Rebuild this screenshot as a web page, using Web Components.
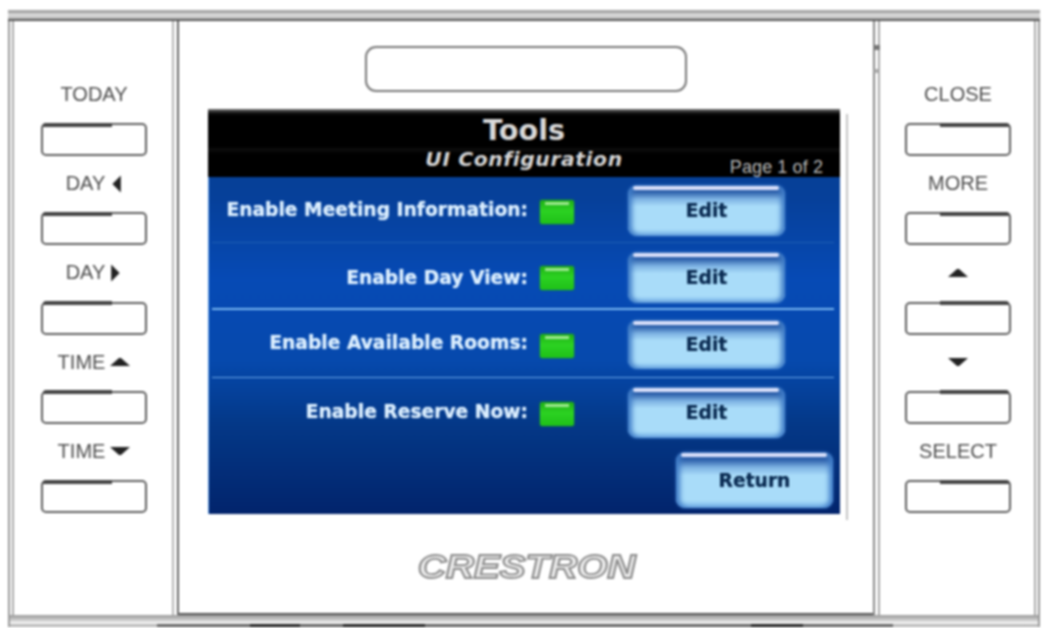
<!DOCTYPE html>
<html><head><meta charset="utf-8"><title>Tools</title>
<style>html,body{margin:0;background:#fff;width:1046px;height:628px;overflow:hidden}</style></head>
<body>
<template id="t-shell"><style>
:host{display:grid;box-sizing:border-box;width:1032px;height:617px;margin:10px 6px 1px 8px;grid-template-columns:164px 708px 160px;grid-template-rows:11px 1fr 12px;filter:blur(.8px);font-family:"Liberation Sans",Arial,sans-serif}
.top{grid-column:1/-1;background:linear-gradient(#a8a8a8 0,#a8a8a8 22%,#dedede 40%,#cfcfcf 60%,#bdbdbd 75%,#555 90%,#444 100%)}
.bottom{grid-column:1/-1;background:
 linear-gradient(90deg,transparent 242px,#222 242px,#222 292px,transparent 292px,transparent 335px,#222 335px,#222 417px,transparent 417px,transparent 743px,#222 743px,#222 795px,transparent 795px) 0 100%/100% 3px no-repeat,
 linear-gradient(90deg,#bbb 0,#bbb 149px,#666 149px,#666 885px,#bbb 885px) 0 100%/100% 3px no-repeat,
 linear-gradient(#9a9a9a 0,#c9c9c9 40%,#e8e8e8 60%,#fff 75%,#fff 100%);box-shadow:inset 2px 0 0 #999,inset -2px 0 0 #999}
::slotted([slot=left]){box-shadow:inset 2px 0 0 #999,inset 4px 0 0 #fff,inset 6px 0 0 #aaa}
::slotted([slot=right]){box-shadow:inset -2px 0 0 #999,inset -4px 0 0 #fff,inset -6px 0 0 #aaa}
</style><div class="top"></div><slot name="left"></slot><slot name="center"></slot><slot name="right"></slot><div class="bottom"></div></template>

<template id="t-panel"><style>
:host{display:grid;grid-auto-rows:89.25px;align-content:start;justify-items:center;box-sizing:border-box;padding-top:45.75px;min-height:0}
</style><slot></slot></template>

<template id="t-key"><style>
:host{display:flex;flex-direction:column;width:106px;font:20px "Liberation Sans",Arial,sans-serif;color:#4d4d4d}
.l{flex:1;display:flex;align-items:center;justify-content:center;gap:5px;white-space:nowrap;padding-bottom:1px}
.b{position:relative;box-sizing:border-box;height:33px;border:2.5px solid #5e5e5e;border-radius:5px;background:#fff}
.b::before{content:"";position:absolute;top:-2.5px;height:4px;width:68%;left:0;background:#444;border-radius:3px 0 0 0}
:host([dark=right]) .b::before{left:auto;right:0;border-radius:0 3px 0 0}
</style><div class="l"><slot></slot><slot name="arrow"></slot></div><div class="b"></div></template>

<template id="t-arrow"><style>
:host{display:inline-flex}svg{display:block}
</style><svg id="s" width="20" height="14" viewBox="0 0 20 14"><polygon id="p" fill="#222"></polygon></svg></template>

<template id="t-center"><style>
:host{display:flex;flex-direction:column;align-items:center;box-sizing:border-box;box-shadow:inset 2px 0 0 #b5b5b5,inset 5px 0 0 #fff,inset 7px 0 0 #666,inset -2px 0 0 #aaa,inset -5px 0 0 #fff,inset -7px 0 0 #888,inset 0 -2px 0 #555;min-height:0;position:relative}
.display{box-sizing:border-box;width:322px;height:46px;margin-top:25px;border:2px solid #777;border-radius:11px;background:#fff}
.wrap{display:flex;align-self:flex-start;margin:17px 0 0 36px;position:relative}
.edge{width:2px;margin:5px 0 -6px 6px;background:#c4c4c4}
.logo{margin-top:31px;font:italic bold 33px "Liberation Sans",Arial,sans-serif;letter-spacing:-.3px;color:#ececec;-webkit-text-stroke:1.8px #8c8c8c;transform:scaleX(1.19);line-height:44px}
.mark{position:absolute;right:0;width:6px;height:5px;background:#777}
</style><div class="display"></div><div class="wrap"><slot></slot><div class="edge"></div></div><div class="logo">CRESTRON</div><i class="mark" style="top:24px"></i><i class="mark" style="top:48px;background:#aaa;height:4px"></i></template>

<template id="t-screen"><style>
:host{display:block;box-sizing:border-box;width:632px;height:405px;background:linear-gradient(#08408f 0,#06409a 22%,#064ab5 42%,#0649ad 62%,#043887 78%,#02246c 100%);box-shadow:inset 1px 0 0 #5f9fe8;font-family:"DejaVu Sans",Verdana,sans-serif}
header{box-sizing:border-box;height:68px;background:linear-gradient(#777 0,#111 4px,#000 7px,#000 55%,#0d0d0d 60%,#000 66%);display:flex;flex-direction:column;align-items:center;position:relative;color:#ddd}
h1{margin:3px 0 0;font:bold 28.7px/36px "DejaVu Sans",Verdana,sans-serif;color:#d9d9d9}
h2{margin:-2px 0 0;font:italic bold 20.3px/26px "DejaVu Sans",Verdana,sans-serif;letter-spacing:.6px;color:#d6d6d6}
.page{position:absolute;right:17px;bottom:-1px;font:18px/22px "Liberation Sans",Arial,sans-serif;color:#b8b8b8;letter-spacing:.1px}
.foot{display:flex;justify-content:flex-end;box-sizing:border-box;height:68px;padding:6px 7px 0 0}
</style><header><h1>Tools</h1><h2>UI Configuration</h2><div class="page">Page 1 of 2</div></header><slot></slot><div class="foot"><slot name="foot"></slot></div></template>

<template id="t-row"><style>
:host{display:grid;grid-template-columns:320px 34px 157px;column-gap:12px;align-items:center;box-sizing:border-box;height:var(--h,67px);padding-top:1px;position:relative;font:bold 18.7px "DejaVu Sans",Verdana,sans-serif;color:#dcefff;text-shadow:0 0 1px #dcefff}
:host::after{content:"";position:absolute;left:4px;right:6px;bottom:0;height:var(--line-h,1px);background:var(--line,transparent)}
.t{text-align:right;white-space:nowrap;padding-bottom:var(--tp,2px)}
.e{margin-left:42px;width:157px;text-shadow:none}
</style><div class="t"><slot></slot></div><status-led></status-led><div class="e"><slot name="action"></slot></div></template>

<template id="t-led"><style>
:host{display:block;width:34px;height:24px;margin-top:2px;border-radius:2px;position:relative;background:linear-gradient(#1fae16,#2cd222 45%,#1fc018);box-shadow:0 0 2px #1b8a2a}
:host::before{content:"";position:absolute;left:5px;right:5px;top:2px;height:3px;background:#9de88f}
</style></template>

<template id="t-gloss"><style>
:host{display:flex;align-items:center;justify-content:center;box-sizing:border-box;width:157px;height:var(--bh,51px);position:relative;border-radius:9px;font:bold 18.7px "DejaVu Sans",Verdana,sans-serif;color:#0a2b52;text-shadow:0 0 .6px #0a2b52;background:linear-gradient(#2d5da8 0,#2f62ac 14%,#7fb4e4 28%,#a9dcf9 42%,#a9dcf9 86%,#79b4e8 100%);box-shadow:inset 5px 0 5px -1px #3f7cc8,inset -5px 0 5px -1px #3f7cc8,0 0 3px #3a78c8}
:host::before{content:"";position:absolute;left:5px;right:6px;top:1px;height:4px;border-radius:2px;background:#d8dffa}
</style><slot></slot></template>

<device-shell>
  <side-panel slot="left" style="padding-left:8px">
    <key-button>TODAY</key-button>
    <key-button>DAY<key-arrow slot="arrow" dir="left"></key-arrow></key-button>
    <key-button>DAY<key-arrow slot="arrow" dir="right"></key-arrow></key-button>
    <key-button>TIME<key-arrow slot="arrow" dir="up"></key-arrow></key-button>
    <key-button>TIME<key-arrow slot="arrow" dir="down"></key-arrow></key-button>
  </side-panel>
  <center-panel slot="center">
    <touch-screen>
      <config-row style="--h:66px;--line:#1f5fb4">Enable Meeting Information:<gloss-button slot="action">Edit</gloss-button></config-row>
      <config-row style="--h:67px;--line:#79b6f2;--line-h:2px;--tp:0px">Enable Day View:<gloss-button slot="action">Edit</gloss-button></config-row>
      <config-row style="--h:68px;--line:#6aa6ea;--tp:4px">Enable Available Rooms:<gloss-button slot="action" style="--bh:49px">Edit</gloss-button></config-row>
      <config-row style="--h:68px">Enable Reserve Now:<gloss-button slot="action">Edit</gloss-button></config-row>
      <gloss-button slot="foot" style="--bh:56px">Return</gloss-button>
    </touch-screen>
  </center-panel>
  <side-panel slot="right" style="padding-right:4px">
    <key-button dark="right">CLOSE</key-button>
    <key-button dark="right">MORE</key-button>
    <key-button dark="right"><key-arrow dir="up"></key-arrow></key-button>
    <key-button dark="right"><key-arrow dir="down"></key-arrow></key-button>
    <key-button dark="right">SELECT</key-button>
  </side-panel>
</device-shell>

<script>
const mk=(name,tid,init)=>customElements.define(name,class extends HTMLElement{
  constructor(){super();const r=this.attachShadow({mode:'open'});r.appendChild(document.getElementById(tid).content.cloneNode(true));}
  connectedCallback(){init&&init(this)}
});
mk('device-shell','t-shell');
mk('side-panel','t-panel');
mk('key-button','t-key');
mk('center-panel','t-center');
mk('touch-screen','t-screen');
mk('config-row','t-row');
mk('status-led','t-led');
mk('gloss-button','t-gloss');
mk('key-arrow','t-arrow',el=>{
  const pts={left:'10,7 17,0 17,14',right:'3,0 3,14 10,7',up:'0,11 9,3 11,3 20,11',down:'0,3 20,3 11,11 9,11'}[el.getAttribute('dir')];
  const s=el.shadowRoot.getElementById('s');el.shadowRoot.getElementById('p').setAttribute('points',pts);
  if(el.getAttribute('dir')==='left'||el.getAttribute('dir')==='right'){s.setAttribute('width','12');s.setAttribute('viewBox',el.getAttribute('dir')==='left'?'8 0 10 14':'2 0 10 14');s.setAttribute('height','18');}
});
</script>
</body></html>
